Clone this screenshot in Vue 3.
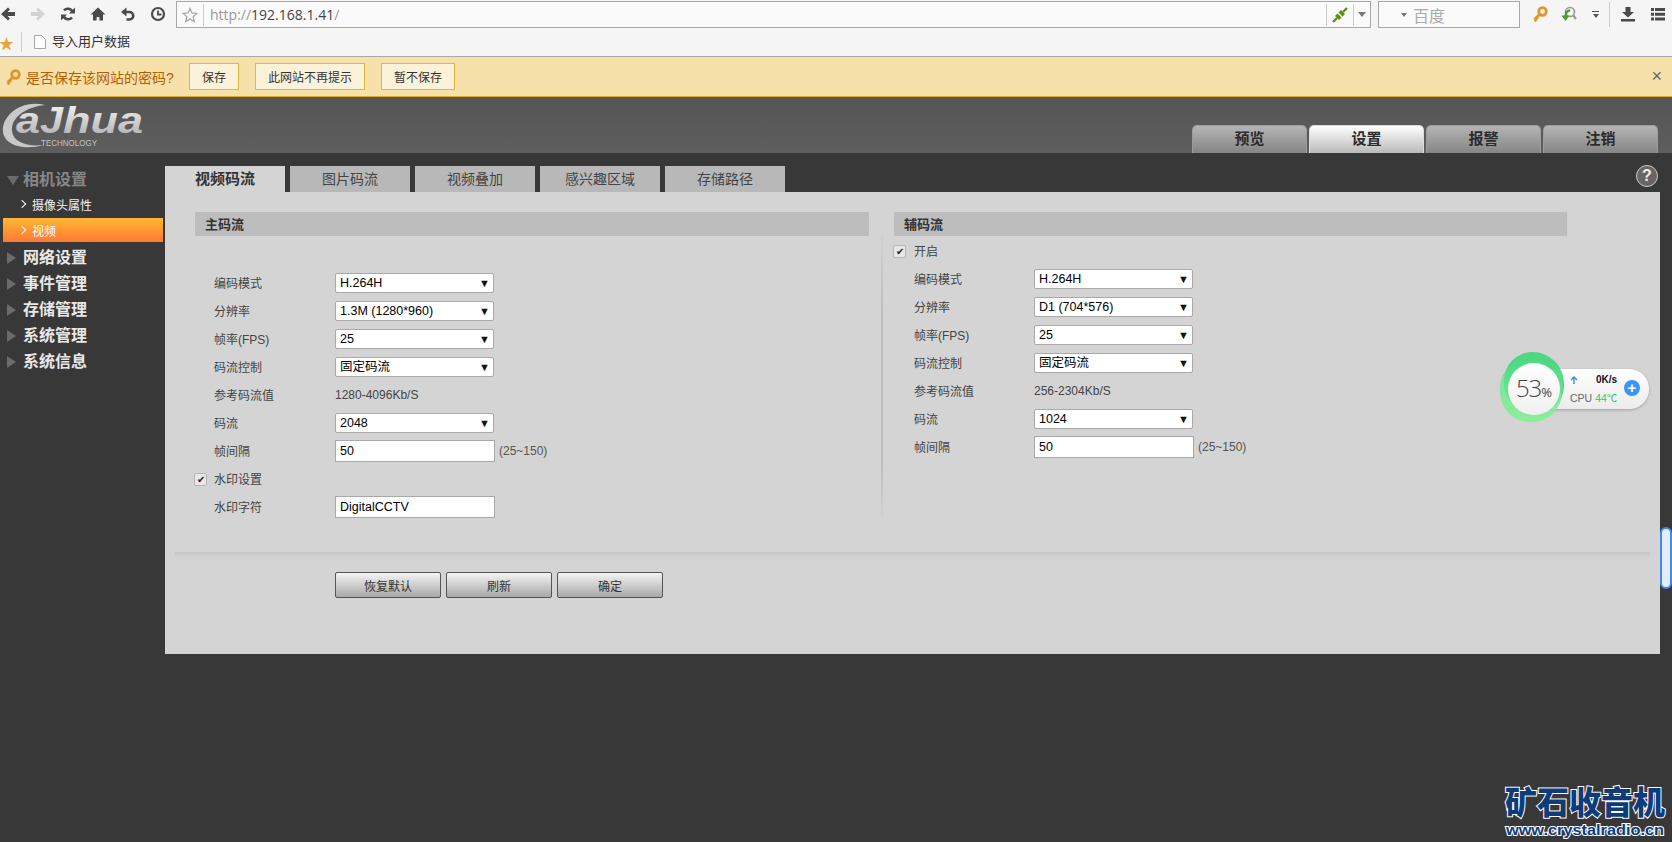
<script setup>
const menus = ['网络设置', '事件管理', '存储管理', '系统管理', '系统信息']
const topTabs = [
  { name: '预览' },
  { name: '设置', active: true },
  { name: '报警' },
  { name: '注销' },
]
const subTabs = ['视频码流', '图片码流', '视频叠加', '感兴趣区域', '存储路径']
const mainRows = [
  { label: '编码模式', type: 'select', value: 'H.264H' },
  { label: '分辨率', type: 'select', value: '1.3M (1280*960)' },
  { label: '帧率(FPS)', type: 'select', value: '25' },
  { label: '码流控制', type: 'select', value: '固定码流' },
  { label: '参考码流值', type: 'text', value: '1280-4096Kb/S' },
  { label: '码流', type: 'select', value: '2048' },
  { label: '帧间隔', type: 'input', value: '50', hint: '(25~150)' },
]
const subRows = [
  { label: '编码模式', type: 'select', value: 'H.264H' },
  { label: '分辨率', type: 'select', value: 'D1 (704*576)' },
  { label: '帧率(FPS)', type: 'select', value: '25' },
  { label: '码流控制', type: 'select', value: '固定码流' },
  { label: '参考码流值', type: 'text', value: '256-2304Kb/S' },
  { label: '码流', type: 'select', value: '1024' },
  { label: '帧间隔', type: 'input', value: '50', hint: '(25~150)' },
]
</script>

<template>
  <div class="page">
    <div class="browser">
      <div class="nav-row">
        <div class="nav-icons">
          <svg class="ic" viewBox="0 0 16 16"><path d="M8 1.500 1 8l7 6.500 2-2L7.500 10H15V6H7.500L10 3.500z" fill="#4a4a4a"/></svg>
          <svg class="ic" viewBox="0 0 16 16"><path d="M8 1.500 15 8l-7 6.500-2-2L8.500 10H1V6h7.500L6 3.500z" fill="#d2d2d2"/></svg>
          <svg class="ic" viewBox="0 0 16 16"><path d="M12.500 6A5 5 0 0 0 4 4.500M3.500 10A5 5 0 0 0 12 11.500" fill="none" stroke="#4a4a4a" stroke-width="2.600"/><path d="M15 1.500V7.500H9zM1 14.500V8.500H7z" fill="#4a4a4a"/></svg>
          <svg class="ic" viewBox="0 0 16 16"><path d="M8 1.500 0.500 8.500H3V14.500h3.600v-3.500h2.800v3.500H13V8.500h2.500z" fill="#4a4a4a"/></svg>
          <svg class="ic" viewBox="0 0 16 16"><path d="M5 6h4.500a3.700 3.700 0 0 1 0 7.500H6.500" fill="none" stroke="#4a4a4a" stroke-width="2.600"/><path d="M6.500 1.500v9L1 6z" fill="#4a4a4a"/></svg>
          <svg class="ic" viewBox="0 0 16 16"><circle cx="8" cy="8" r="6" fill="none" stroke="#4a4a4a" stroke-width="2.200"/><path d="M8 4.500V8.500H11.500" fill="none" stroke="#4a4a4a" stroke-width="1.800"/></svg>
        </div>
        <div class="address">
          <svg class="star" viewBox="0 0 16 16"><path d="M8 1.500l2 4.500 4.800.5-3.600 3.200 1 4.800L8 12.100 3.800 14.500l1-4.800L1.200 6.500 6 6z" fill="none" stroke="#aaa" stroke-width="1.300"/></svg>
          <span class="sep"></span>
          <span class="url"><span class="dim">http://</span>192.168.1.41<span class="dim">/</span></span>
          <span class="sep push"></span>
          <svg class="plug" viewBox="0 0 16 16"><path d="M1 15l4-4M11 5l4-4" stroke="#5f8f0c" stroke-width="2.400"/><path d="M3 9l2.500-2.500 4 4L7 13zM6.500 5.500L9 3l4 4-2.500 2.500z" fill="#5f8f0c"/></svg>
          <span class="sep"></span>
          <span class="caret-box"><span class="caret"></span></span>
        </div>
        <div class="search">
          <span class="caret small"></span>
          <span class="search-text">百度</span>
        </div>
        <div class="tools">
          <svg class="ic key" viewBox="0 0 16 16"><circle cx="10.500" cy="5.500" r="3.800" fill="none" stroke="#e0952c" stroke-width="2.800"/><path d="M8 8 2.500 13.500M2.500 13.500l2 1.500M4.500 11.500l1.500 1.500" stroke="#e0952c" stroke-width="2.800"/></svg>
          <svg class="ic restore" viewBox="0 0 16 16"><circle cx="9" cy="6" r="4.500" fill="none" stroke="#9a9a9a" stroke-width="1.700"/><path d="M12 9l3 4" stroke="#9a9a9a" stroke-width="2.200"/><path d="M9 4 5.500 6 4.500 10" stroke="#4f9a2f" stroke-width="2.400" fill="none"/><path d="M0.500 9.500h8L4.500 15z" fill="#4f9a2f"/></svg>
          <span class="menu-mini"><i></i><b></b></span>
          <span class="tool-sep"></span>
          <svg class="ic" viewBox="0 0 16 16"><path d="M5.500 1h5v5h3.500L8 11.500 2 6h3.500zM1 13h14v2.500H1z" fill="#4a4a4a"/></svg>
          <svg class="ic" viewBox="0 0 16 16"><path d="M1 2h3v3H1zM5 2h10v3H5zM1 6.800h3v3H1zM5 6.800h10v3H5zM1 11.500h3v3H1zM5 11.500h10v3H5z" fill="#4a4a4a"/></svg>
        </div>
      </div>
      <div class="bm-row">
        <span class="bm-star">★</span>
        <span class="bm-sep"></span>
        <svg class="doc" viewBox="0 0 12 14"><path d="M.5.500h7l4 4v9H.5z" fill="#fff" stroke="#aaa"/></svg>
        <span class="bm-text">导入用户数据</span>
      </div>
    </div>

    <div class="infobar">
      <svg class="info-key" viewBox="0 0 16 16"><circle cx="10.500" cy="5.500" r="3.800" fill="none" stroke="#e0952c" stroke-width="2.800"/><path d="M8 8 2.500 13.500M2.500 13.500l2 1.500M4.500 11.500l1.500 1.500" stroke="#e0952c" stroke-width="2.800"/></svg>
      <span class="info-text">是否保存该网站的密码?</span>
      <button class="info-btn first">保存</button>
      <button class="info-btn second">此网站不再提示</button>
      <button class="info-btn third">暂不保存</button>
      <span class="info-close">×</span>
    </div>

    <header class="head">
      <svg class="logo" viewBox="0 0 145 52">
        <defs>
          <linearGradient id="lg" x1="0" y1="0" x2="0" y2="1">
            <stop offset="0" stop-color="#fafafa"/>
            <stop offset="1" stop-color="#a9a9a9"/>
          </linearGradient>
        </defs>
        <path d="M44 6C18 0 0 19 2 33c2 15 24 18 40 13-16 2-30-3-31-14C10 18 25 8 44 6z" fill="#c9c9c9"/>
        <text x="15" y="34" class="logo-text" fill="url(#lg)" textLength="24" lengthAdjust="spacingAndGlyphs">a</text>
        <text x="39" y="34" class="logo-text" fill="url(#lg)" textLength="23" lengthAdjust="spacingAndGlyphs">J</text>
        <text x="62" y="34" class="logo-text" fill="url(#lg)" textLength="80" lengthAdjust="spacingAndGlyphs">hua</text>
        <text x="40" y="47" class="logo-sub" textLength="56" lengthAdjust="spacingAndGlyphs">TECHNOLOGY</text>
      </svg>
      <nav class="top-tabs">
        <div v-for="t in topTabs" :key="t.name" class="top-tab" :class="{ on: t.active }">{{ t.name }}</div>
      </nav>
    </header>

    <main class="body">
      <aside class="side">
        <div class="menu open"><span class="tri-down"></span>相机设置</div>
        <div class="sub"><span class="chev"></span>摄像头属性</div>
        <div class="sub on"><span class="chev"></span>视频</div>
        <div v-for="m in menus" :key="m" class="menu"><span class="tri"></span>{{ m }}</div>
      </aside>

      <section class="content">
        <div class="tabs">
          <div v-for="(t, i) in subTabs" :key="t" class="tab" :class="{ on: i === 0 }">{{ t }}</div>
          <span class="help">?</span>
        </div>
        <div class="panel">
          <div class="cols">
            <div class="col main-col">
              <div class="sec">主码流</div>
              <div class="rows">
                <div v-for="r in mainRows" :key="r.label" class="row" :class="'r-' + r.type">
                  <span class="lbl">{{ r.label }}</span>
                  <div v-if="r.type === 'select'" class="sel">{{ r.value }}<i>▼</i></div>
                  <span v-else-if="r.type === 'text'" class="val">{{ r.value }}</span>
                  <template v-else>
                    <div class="inp">{{ r.value }}</div>
                    <span class="hint">{{ r.hint }}</span>
                  </template>
                </div>
                <div class="row check-row"><span class="chk">✔</span><span class="chk-lbl">水印设置</span></div>
                <div class="row r-input"><span class="lbl">水印字符</span><div class="inp">DigitalCCTV</div></div>
              </div>
            </div>
            <div class="col sub-col">
              <div class="sec">辅码流</div>
              <div class="sub-body">
                <div class="row check-row open"><span class="chk">✔</span><span class="chk-lbl">开启</span></div>
                <div v-for="r in subRows" :key="r.label" class="row" :class="'r-' + r.type">
                  <span class="lbl">{{ r.label }}</span>
                  <div v-if="r.type === 'select'" class="sel">{{ r.value }}<i>▼</i></div>
                  <span v-else-if="r.type === 'text'" class="val">{{ r.value }}</span>
                  <template v-else>
                    <div class="inp">{{ r.value }}</div>
                    <span class="hint">{{ r.hint }}</span>
                  </template>
                </div>
              </div>
            </div>
          </div>
          <div class="rule"></div>
          <div class="actions">
            <button class="act">恢复默认</button>
            <button class="act">刷新</button>
            <button class="act">确定</button>
          </div>
        </div>
      </section>
    </main>

    <div class="widget">
      <div class="pill">
        <div class="pill-a">
          <svg class="arrow" viewBox="0 0 8 8"><path d="M4 8V1M1 4l3-3 3 3" fill="none" stroke="#3a8fe8" stroke-width="1.400"/></svg>
          <b>0K/s</b>
        </div>
        <div class="pill-b"><span>CPU</span><em>44℃</em></div>
        <span class="plus">+</span>
      </div>
      <div class="blob b1"></div>
      <div class="blob b2"></div>
      <div class="ring"><span>53</span><small>%</small></div>
    </div>

    <div class="scroll-handle"></div>

    <div class="mark">
      <svg viewBox="0 0 174 62" class="mark-svg">
        <text x="87" y="34" text-anchor="middle" class="mark-cn">矿石收音机</text>
        <text x="8" y="55" class="mark-en" textLength="158" lengthAdjust="spacingAndGlyphs">www.crystalradio.cn</text>
      </svg>
    </div>
  </div>
</template>

<style>
html, body { margin: 0; background: #383838; overflow: hidden; }
</style>

<style scoped>
.page {
  position: relative;
  width: 1672px;
  height: 842px;
  overflow: hidden;
  background: #383838;
  font-family: "Liberation Sans", "Noto Sans CJK SC", sans-serif;
  font-size: 12px;
  color: #333;
}
.browser { height: 56px; background: #f5f5f5; border-bottom: 1px solid #aaa; }
.nav-row { height: 28px; display: flex; align-items: flex-start; }
.nav-icons { width: 176px; flex: none; display: flex; gap: 14px; padding: 6px 0 0 0; box-sizing: border-box; }
.ic { width: 16px; height: 16px; flex: none; }
.address {
  width: 1195px; height: 27px; margin-top: 1px; flex: none; box-sizing: border-box;
  background: #fafafa; border: 1px solid #a8a8a8; display: flex; align-items: center;
}
.star { width: 16px; height: 16px; margin: 0 5px; flex: none; }
.sep { width: 1px; height: 22px; background: #ccc; flex: none; }
.sep.push { margin-left: auto; }
.url { margin-left: 6px; font-size: 14px; color: #444; font-family: "Open Sans", "Liberation Sans", sans-serif; }
.dim { color: #999; }
.plug { width: 16px; height: 16px; margin: 0 5px; flex: none; }
.caret-box { width: 16px; display: flex; justify-content: center; flex: none; }
.caret { width: 0; height: 0; border: 4px solid transparent; border-top: 5px solid #777; border-bottom: 0; }
.search {
  width: 142px; height: 27px; margin: 1px 0 0 7px; flex: none; box-sizing: border-box;
  background: #fafafa; border: 1px solid #a8a8a8; display: flex; align-items: center; padding-left: 22px;
}
.caret.small { border-width: 3px; border-top-width: 4px; border-bottom: 0; }
.search-text { margin-left: 6px; font-size: 16px; color: #aaa; }
.tools { flex: none; height: 28px; display: flex; align-items: center; padding-left: 12px; }
.tools .key { margin-right: 13px; }
.tools .restore { margin-right: 15px; }
.menu-mini { width: 7px; display: flex; flex-direction: column; align-items: center; gap: 2px; margin-right: 10px; }
.menu-mini i { width: 7px; height: 1px; background: #555; }
.menu-mini b { width: 0; height: 0; border: 3px solid transparent; border-top: 4px solid #555; border-bottom: 0; }
.tool-sep { width: 1px; height: 25px; background: #ccc; margin-right: 10px; }
.tools .ic:last-child { margin-left: 14px; }

.bm-row { height: 28px; display: flex; align-items: center; }
.bm-star { color: #e8a33d; font-size: 15px; width: 17px; margin-left: -1px; }
.bm-sep { width: 1px; height: 20px; background: #ccc; margin-left: 5px; }
.doc { width: 12px; height: 14px; margin-left: 12px; }
.bm-text { margin: 0 0 3px 6px; color: #333; font-size: 13px; }

.infobar {
  height: 39px; background: #f6e1ab; border-bottom: 1px solid #e8ac22;
  display: flex; align-items: center; position: relative;
}
.info-key { width: 16px; height: 16px; margin-left: 5px; }
.info-text { margin-left: 5px; font-size: 14px; color: #b45f06; width: 149px; white-space: nowrap; }
.info-btn {
  height: 27px; padding: 0; background: #fbf2da; border: 1px solid #e8b53d; font: inherit; color: #333;
}
.info-btn.first { width: 50px; margin-left: 14px; }
.info-btn.second { width: 110px; margin-left: 16px; }
.info-btn.third { width: 74px; margin-left: 16px; }
.info-close { margin-left: auto; margin-right: 10px; font-size: 18px; color: #666; }

.head {
  height: 56px; background: linear-gradient(#555 0, #5e5e5e 100%);
  display: flex; justify-content: space-between; position: relative;
}
.logo { width: 145px; height: 52px; margin-left: 1px; margin-top: 2px; }
.logo-text { font: italic 700 36px "Liberation Sans", sans-serif; }
.logo-sub { font: 9px "Liberation Sans", sans-serif; fill: #c4c4c4; }
.top-tabs { display: flex; gap: 2px; align-self: flex-end; margin-right: 14px; }
.top-tab {
  width: 115px; height: 28px; box-sizing: border-box; text-align: center; line-height: 25px;
  border-radius: 5px 5px 0 0; border: 1px solid #9d9d9d; border-bottom: 0;
  background: linear-gradient(#b5b5b5, #858585); font-size: 15px; font-weight: 700; color: #2b2b2b;
}
.top-tab.on { background: linear-gradient(#fff, #b9b9b9); border-color: #ddd; }

.body { display: flex; height: 501px; }
.side { width: 165px; flex: none; padding-top: 13px; box-sizing: border-box; }
.menu {
  height: 26px; box-sizing: border-box; line-height: 26px; font-size: 16px; font-weight: 700; color: #e8e8e8;
  display: flex; align-items: center; padding: 2px 0 0 7px; white-space: nowrap;
}
.menu.open { color: #868686; }
.tri { width: 0; height: 0; border: 6px solid transparent; border-left: 9px solid #6b6b6b; border-right: 0; margin-right: 7px; }
.tri-down { width: 0; height: 0; border: 6px solid transparent; border-top: 9px solid #6b6b6b; border-bottom: 0; margin-right: 4px; }
.sub {
  height: 26px; margin-left: 3px; width: 160px; display: flex; align-items: center; color: #f2f2f2; font-size: 12px;
  padding: 0 0 2px 17px; box-sizing: border-box;
}
.sub.on { height: 24px; margin-bottom: 2px; padding-bottom: 0; background: linear-gradient(#ffb733, #ff7835); color: #fff; }
.chev {
  width: 5px; height: 5px; border-top: 1.500px solid #fff; border-right: 1.500px solid #fff; transform: rotate(45deg);
  margin-right: 7px; margin-left: -1px; flex: none;
}

.content { width: 1495px; flex: none; }
.tabs { height: 26px; margin-top: 13px; display: flex; gap: 5px; position: relative; }
.tab {
  width: 120px; height: 26px; line-height: 26px; text-align: center; background: #b8b8b8;
  font-size: 14px; color: #444;
}
.tab.on { background: #d4d4d4; font-weight: 700; font-size: 15px; color: #333; }
.help {
  position: absolute; right: 2px; top: -1px; width: 20px; height: 20px; border-radius: 50%;
  background: #666; border: 1px solid #ccc; color: #eee; text-align: center; line-height: 20px;
  font-weight: 700; font-size: 16px;
}
.panel { height: 462px; background: #d4d4d4; padding-top: 20px; box-sizing: border-box; }
.cols { display: flex; height: 340px; }
.col { flex: none; }
.main-col { width: 674px; margin-left: 30px; }
.sub-col { width: 673px; margin-left: 25px; }
.sec {
  height: 24px; line-height: 25px; background: #bdbdbd; font-weight: 700; font-size: 13px; color: #333;
  padding-left: 10px;
}
.rows { padding-top: 33px; }
.sub-body { position: relative; padding-top: 2px; }
.sub-body::before {
  content: ""; position: absolute; left: -13px; top: 0; height: 280px; width: 2px;
  background: linear-gradient(#d0d0d0, #bcbcbc 30%, #bcbcbc 80%, #d0d0d0);
}
.row { display: flex; align-items: center; height: 28px; }
.check-row.open { height: 27px; }
.lbl { width: 121px; margin-left: 19px; padding-bottom: 2px; flex: none; color: #444; font-size: 12px; white-space: nowrap; }
.sub-body .lbl { width: 120px; margin-left: 20px; }
.sel {
  width: 159px; height: 20px; box-sizing: border-box; background: #fff; border: 1px solid #a9a9a9; border-radius: 2px;
  font-size: 12.500px; color: #000; padding-left: 4px; line-height: 18px; display: flex; justify-content: space-between;
}
.sel i { font-style: normal; font-size: 11px; padding-right: 3px; color: #111; }
.inp {
  width: 160px; height: 22px; box-sizing: border-box; background: #fff; border: 1px solid #a9a9a9;
  font-size: 12.500px; color: #000; padding-left: 4px; line-height: 20px;
}
.val { color: #444; font-size: 12px; }
.hint { margin-left: 4px; color: #555; font-size: 12px; }
.chk {
  width: 11px; height: 11px; margin-left: -1px; flex: none; background: #e8e8e8; border: 1px solid #b5b5b5; border-radius: 2px;
  font-size: 10px; line-height: 11px; text-align: center; color: #222;
}
.check-row .chk-lbl { margin-left: 7px; padding-bottom: 2px; color: #444; }
.check-row.open .chk-lbl { margin-left: 8px; }

.rule { height: 6px; margin: 0 10px; background: linear-gradient(#c6c6c6, #d4d4d4); width: 1475px; }
.actions { display: flex; gap: 5px; padding: 14px 0 0 170px; }
.act {
  width: 106px; height: 26px; padding: 0; border: 1px solid #555; border-radius: 2px;
  background: linear-gradient(#f4f4f4, #a8a8a8); font: inherit; color: #333;
}

.widget { position: absolute; left: 1500px; top: 352px; width: 150px; height: 76px; }
.pill {
  position: absolute; left: 34px; top: 17px; width: 115px; height: 40px; border-radius: 20px;
  background: linear-gradient(#fff, #ececec); box-shadow: 0 1px 3px rgba(0,0,0,.25); font-size: 10.500px;
}
.pill-a { position: absolute; left: 36px; top: 5px; width: 47px; display: flex; justify-content: space-between; align-items: center; font-size: 10px; color: #111; }
.arrow { width: 8px; height: 8px; }
.pill-b { position: absolute; left: 36px; top: 21px; white-space: nowrap; color: #666; }
.pill-b em { font-style: normal; color: #1fce6b; margin-left: 3px; }
.plus {
  position: absolute; left: 90px; top: 11px; width: 16px; height: 16px; border-radius: 50%;
  background: #3a96f2; color: #fff; text-align: center; line-height: 15px; font-weight: 700; font-size: 15px;
}
.blob { position: absolute; }
.b1 {
  left: 4px; top: 0; width: 60px; height: 60px; border-radius: 50% 55% 45% 50%;
  background: rgba(58, 214, 120, .85);
}
.b2 {
  left: 0; top: 8px; width: 62px; height: 62px; border-radius: 46% 54% 50% 50%;
  background: linear-gradient(rgba(70, 220, 130, .6), rgba(135, 240, 150, .95));
}
.ring {
  position: absolute; left: 8px; top: 11px; width: 52px; height: 52px; border-radius: 50%;
  background: linear-gradient(#fff, #f0f0f0); display: flex; align-items: baseline; justify-content: center;
  line-height: 50px; color: #444; font-family: "Open Sans", sans-serif;
}
.ring span { font-size: 24px; font-weight: 300; letter-spacing: -1px; }
.ring small { font-size: 13px; }

.scroll-handle {
  position: absolute; left: 1660px; top: 527px; width: 12px; height: 62px; box-sizing: border-box;
  border-radius: 6px; background: #e3edfe; border: 2px solid #3f8cf0;
}

.mark { position: absolute; left: 1498px; top: 780px; width: 174px; height: 62px; }
.mark-svg { width: 174px; height: 62px; display: block; }
.mark-cn {
  font: 900 32px "Noto Sans CJK SC", sans-serif; fill: #0d3c7c; stroke: #fff; stroke-width: 2px;
  paint-order: stroke;
}
.mark-en {
  font: 700 15px "Liberation Sans", sans-serif; fill: #0d3c7c; stroke: #fff; stroke-width: 2px; paint-order: stroke;
}
</style>
